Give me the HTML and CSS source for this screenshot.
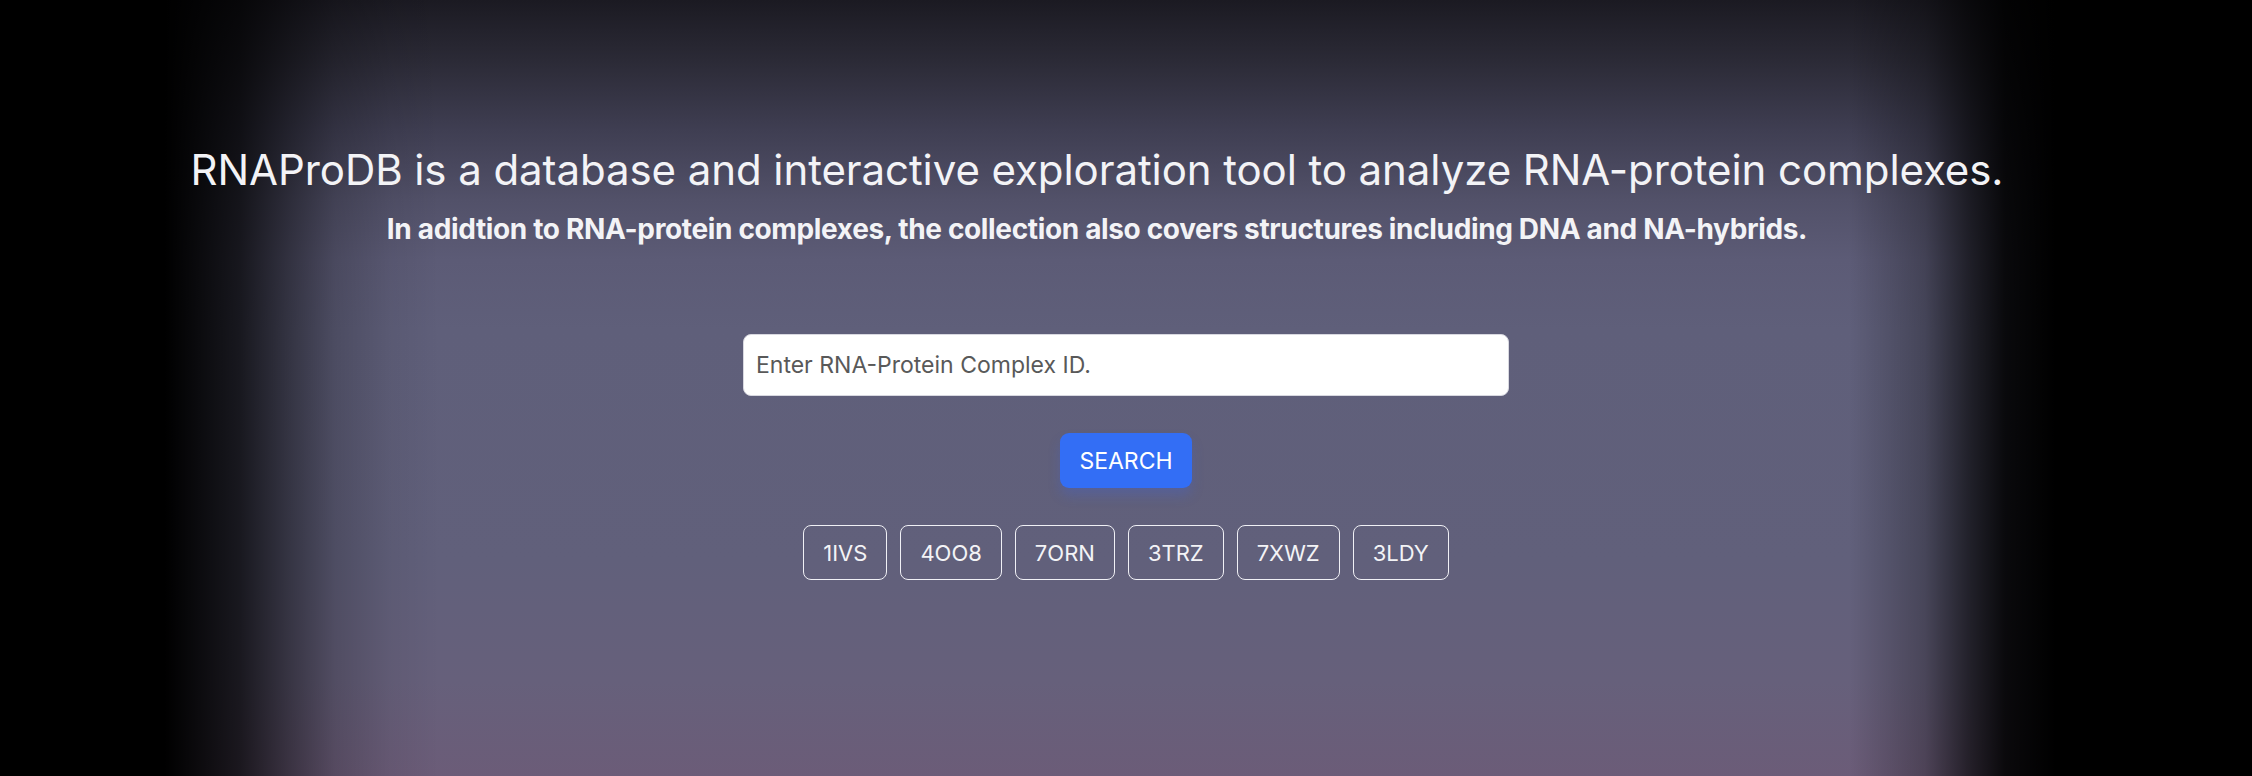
FILE: index.html
```html
<!DOCTYPE html>
<html lang="en">
<head>
<meta charset="utf-8">
<title>RNAProDB</title>
<link rel="stylesheet" href="styles.css">
</head>
<body>
<main class="hero">
  <div class="hero-text">
    <h1 class="hero-title">RNAProDB is a database and interactive exploration tool to analyze RNA-protein complexes.</h1>
    <h2 class="hero-sub">In adidtion to RNA-protein complexes, the collection also covers structures including DNA and NA-hybrids.</h2>
  </div>
  <form class="search">
    <input class="search-input" type="text" placeholder="Enter RNA-Protein Complex ID.">
    <button class="search-btn" type="button">SEARCH</button>
  </form>
  <div class="examples">
    <button class="chip" type="button">1IVS</button>
    <button class="chip" type="button">4OO8</button>
    <button class="chip" type="button">7ORN</button>
    <button class="chip" type="button">3TRZ</button>
    <button class="chip" type="button">7XWZ</button>
    <button class="chip" type="button">3LDY</button>
  </div>
</main>
</body>
</html>
```
FILE: styles.css
```css
* { box-sizing: border-box; }
html, body { height: 100%; }
body {
  margin: 0;
  font-family: Inter, "Noto Sans", sans-serif;
  color: #f3f3f6;
  background:
    linear-gradient(to right,
      #000 0, #000 165px, rgba(0,0,0,.75) 240px, rgba(0,0,0,.45) 290px,
      rgba(0,0,0,.2) 335px, rgba(0,0,0,.06) 390px, rgba(0,0,0,0) 440px,
      rgba(0,0,0,0) 1850px, rgba(0,0,0,.28) 1925px, rgba(0,0,0,.65) 1968px,
      rgba(0,0,0,.9) 2005px, #000 2055px, #000 100%),
    linear-gradient(to bottom,
      #1b1a22 0, #2b2a36 60px, #3f3e52 130px, #525169 200px,
      #5c5b76 260px, #5f5f7a 330px, #61607b 560px, #66607b 680px, #6b5c78 776px);
  background-color: #000;
}
.hero {
  display: flex;
  flex-direction: column;
  align-items: center;
  padding-top: 145px;
}
.hero-text {
  display: flex;
  flex-direction: column;
  align-items: center;
  text-align: center;
  padding-right: 58px;
}
.hero-title {
  margin: 0;
  font-size: 42px;
  font-weight: 400;
  line-height: 50px;
  letter-spacing: -0.08px;
}
.hero-sub {
  margin: 17px 0 0;
  font-size: 28px;
  font-weight: 700;
  line-height: 34px;
  letter-spacing: -0.35px;
}
.search {
  display: flex;
  flex-direction: column;
  align-items: center;
  gap: 37px;
  margin-top: 88px;
}
.search-input {
  width: 766px;
  height: 62px;
  padding: 0 12px;
  border: 1px solid #d8d8e0;
  border-radius: 8px;
  background: #fff;
  font-family: inherit;
  font-size: 23px;
  color: #333;
  outline: none;
}
.search-input::placeholder { color: #595959; }
.search-btn {
  height: 55px;
  padding: 0 19px;
  border: none;
  border-radius: 9px;
  background: #336ef5;
  color: #fff;
  font-family: inherit;
  font-size: 23px;
  box-shadow: 0 8px 12px rgba(60, 100, 230, 0.25);
}
.examples {
  display: flex;
  gap: 13px;
  margin-top: 37px;
}
.chip {
  height: 55px;
  padding: 0 19px;
  border: 1px solid #f0f0f5;
  border-radius: 8px;
  background: transparent;
  color: #f3f3f6;
  font-family: inherit;
  font-size: 22px;
}
```
